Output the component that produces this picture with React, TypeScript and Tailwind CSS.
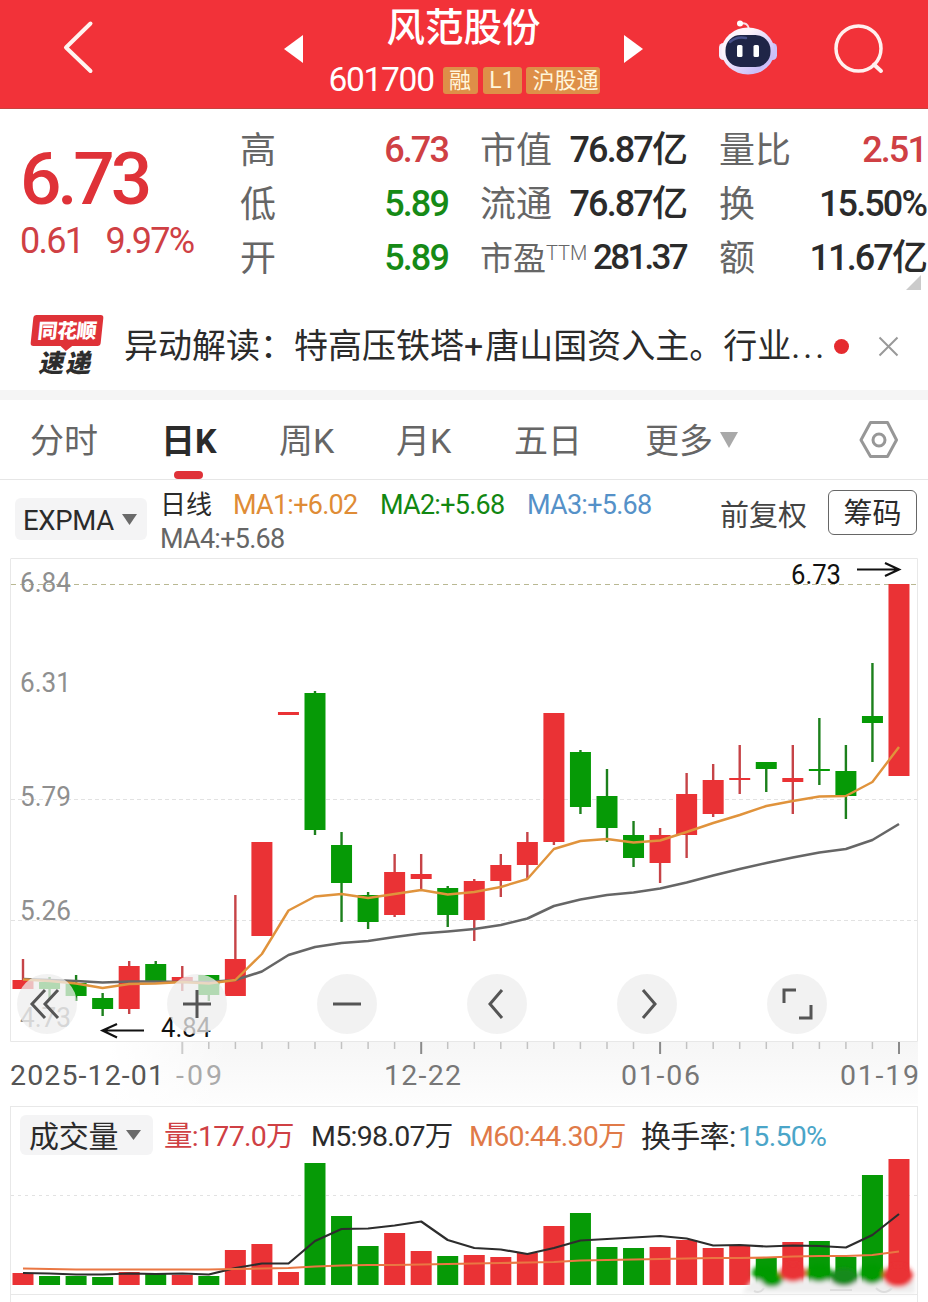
import React from 'react';

// Define the type for a trading day
interface Candle {
  up: boolean;
  top: number;
  bottom: number;
  high: number;
  low: number;
  volume: number;
}

interface StatProps {
  label: string;
  sup?: string;
  value: string;
  color: string;
}

const RED = '#ea3235';
const GREEN = '#069a06';
const STEP = 26.545;

const c = (up: boolean, top: number, bottom: number, high: number, low: number, volume: number): Candle => ({
  up,
  top,
  bottom,
  high,
  low,
  volume,
});

const candles: Candle[] = [
  c(true, 980, 989, 959, 989, 1273),
  c(false, 982, 989, 977, 1000, 1276),
  c(false, 983, 996, 975, 1001, 1276),
  c(false, 998, 1009, 993, 1016, 1277),
  c(true, 966, 1009, 961, 1014, 1272),
  c(false, 964, 981, 961, 981, 1274),
  c(true, 977, 982, 966, 991, 1275),
  c(false, 975, 995, 975, 1001, 1276),
  c(true, 959, 996, 895, 996, 1250),
  c(true, 842, 936, 842, 936, 1244),
  c(true, 712, 715, 712, 715, 1272),
  c(false, 693, 830, 691, 835, 1163),
  c(false, 845, 883, 832, 922, 1216),
  c(false, 895, 922, 892, 929, 1246),
  c(true, 872, 915, 854, 917, 1233),
  c(true, 874, 879, 854, 889, 1251),
  c(false, 888, 915, 886, 927, 1256),
  c(true, 881, 920, 879, 941, 1255),
  c(true, 865, 881, 854, 897, 1257),
  c(true, 842, 865, 832, 879, 1253),
  c(true, 713, 842, 713, 845, 1226),
  c(false, 752, 807, 750, 814, 1213),
  c(false, 796, 828, 769, 842, 1247),
  c(false, 835, 858, 821, 867, 1248),
  c(true, 835, 863, 828, 883, 1247),
  c(true, 794, 835, 773, 858, 1240),
  c(true, 780, 814, 764, 817, 1248),
  c(true, 778, 780, 745, 794, 1245),
  c(false, 762, 769, 762, 792, 1258),
  c(true, 778, 782, 745, 814, 1242),
  c(false, 769, 771, 718, 785, 1241),
  c(false, 771, 796, 745, 819, 1257),
  c(false, 716, 723, 663, 762, 1175),
  c(true, 584, 776, 584, 776, 1159),
];

const fastLine = [
  979.5, 981, 983.5, 988, 984, 983.5, 982, 983.5, 980, 954, 910.5, 896.5, 894, 898, 894, 890, 894.5, 892, 887, 879,
  849, 841, 839, 842.5, 840.5, 832, 823, 815, 806, 801, 796.5, 796, 782, 747,
];
const slowLine = [
  979, 980, 981, 982.5, 981.5, 981.5, 982, 982, 980, 971.5, 955, 947, 943, 941, 937, 933.5, 931.5, 929, 925, 918.5,
  906, 899.5, 895, 892.5, 888.5, 882.5, 875.5, 869, 863, 857.5, 852.5, 849, 840, 824,
];
const volumeM5 = [
  1273, 1273.5, 1274.5, 1274.5, 1273.5, 1274, 1273.5, 1274.5, 1268, 1263.5, 1263.5, 1241, 1229, 1228.5, 1225.5,
  1221.5, 1240, 1248, 1249.5, 1254, 1248, 1240.5, 1239, 1237.5, 1236, 1238.5, 1245.5, 1245, 1246.5, 1245.5, 1246,
  1247.5, 1235, 1214,
];
const volumeM60 = [
  1268.5, 1269, 1269.5, 1269.5, 1269.5, 1269.5, 1269.5, 1269.5, 1269, 1268.5, 1268, 1266.5, 1265.5, 1265, 1265,
  1264.5, 1264, 1263.5, 1263, 1262.5, 1262, 1260.5, 1260, 1259.5, 1259, 1258.5, 1258, 1258, 1257.5, 1256.5, 1256,
  1256, 1255, 1251.5,
];

const xAt = (i: number) => 23 + i * STEP;
const toPoints = (values: number[]) => values.map((y, i) => `${xAt(i).toFixed(1)},${y}`).join(' ');

const RobotIcon = () => (
  <svg className="w-[60px] h-[58px]" viewBox="0 0 60 58">
    <defs>
      <linearGradient id="shell" x1="0" y1="0" x2="1" y2="1">
        <stop offset="0.3" stopColor="#fdf4fb" />
        <stop offset="0.8" stopColor="#c9bdf8" />
        <stop offset="1" stopColor="#eee6ff" />
      </linearGradient>
    </defs>
    <path d="M22 5.500Q30 4 31 11" fill="none" stroke="#f8dfe6" strokeWidth="2" />
    <circle cx="22" cy="5.500" r="3" fill="#fff" />
    <rect x="1" y="25" width="9" height="17" rx="4.500" fill="#f6ecfa" />
    <rect x="50" y="25" width="9" height="17" rx="4.500" fill="#c9c3fb" />
    <ellipse cx="30" cy="33" rx="26.500" ry="23.500" fill="url(#shell)" />
    <rect x="7.500" y="17" width="45" height="32" rx="15" fill="#1f2547" />
    <path d="M12 24Q19 18 28 20" fill="none" stroke="#47508a" strokeWidth="2.500" strokeLinecap="round" />
    <rect x="19" y="27" width="5.500" height="12" rx="1.500" fill="#fff" />
    <rect x="35.500" y="27" width="5.500" height="12" rx="1.500" fill="#fff" />
  </svg>
);

const Header = () => (
  <header className="flex h-[109px] bg-[#f23239] border-b border-[#c9423f] text-white">
    <svg className="ml-[62px] mt-[20px] w-[32px] h-[54px] shrink-0" viewBox="0 0 32 54" fill="none">
      <path d="M28.500 3.500L4 27.500L28.500 51" stroke="#fff4f0" strokeWidth="4" strokeLinecap="round" strokeLinejoin="round" />
    </svg>
    <svg className="ml-[190px] mt-[35px] w-[19px] h-[28px] shrink-0" viewBox="0 0 19 28">
      <path d="M19 0V28L0 14Z" fill="#fff" />
    </svg>
    <div className="ml-[17px] w-[290px] shrink-0 flex flex-col items-center">
      <h1 className="-ml-[3px] mt-[5px] text-[38.500px] leading-[46px] font-medium">风范股份</h1>
      <div className="mt-[11px] -ml-[2px] flex items-center h-[36px]">
        <span className="w-[114px] text-[33.500px] leading-[36px] tracking-[-1.300px]">601700</span>
        <span className="w-[35px] h-[27px] rounded-[3px] bg-[#de8f48] text-[22px] leading-[28px] text-center text-[#fff6dc]">融</span>
        <span className="ml-[5px] w-[39px] h-[27px] rounded-[3px] bg-[#de8f48] text-[23px] leading-[28px] text-center text-[#fff6dc]">L1</span>
        <span className="ml-[4px] w-[74px] h-[27px] rounded-[3px] bg-[#de8f48] pl-[7px] text-[22px] leading-[28px] whitespace-nowrap text-[#fff6dc]">沪股通</span>
      </div>
    </div>
    <svg className="ml-[14px] mt-[35px] w-[19px] h-[28px] shrink-0" viewBox="0 0 19 28">
      <path d="M0 0V28L19 14Z" fill="#fff" />
    </svg>
    <div className="ml-[75px] mt-[18px] shrink-0">
      <RobotIcon />
    </div>
    <svg className="ml-[56px] mt-[23px] w-[52px] h-[52px] shrink-0" viewBox="0 0 52 52" fill="none" stroke="#fff0ee" strokeLinecap="round">
      <circle cx="24.500" cy="25.500" r="22.500" strokeWidth="3.500" />
      <path d="M40 41.500L47 48" strokeWidth="4" />
    </svg>
  </header>
);

const Stat: React.FC<StatProps> = ({ label, sup, value, color }) => (
  <div className="flex justify-between h-[54px] leading-[54px] whitespace-nowrap">
    <span className="text-[36px] text-[#666] flex">
      <span className={sup ? 'text-[33px]' : ''}>{label}</span>
      {sup && <span className="text-[20px] leading-[42px] font-light">{sup}</span>}
    </span>
    <span className={`-mt-px mr-[2px] font-medium ${sup ? 'text-[35px] tracking-[-2.700px]' : 'text-[36px] tracking-[-1.900px]'} ${color}`}>
      {value}
    </span>
  </div>
);

const Quote = () => (
  <section className="relative flex h-[183px] pt-[15px]">
    <div className="w-[240px] pl-[20px] shrink-0 text-[#df3238]">
      <div className="mt-[17px] h-[76px] text-[73px] leading-[76px] tracking-[-4.200px] font-medium">6.73</div>
      <div className="mt-[4px] flex gap-[22px] text-[36px] leading-[40px] tracking-[-1.700px] text-[#cf4044]">
        <span>0.61</span>
        <span>9.97%</span>
      </div>
    </div>
    <div className="w-[210px] shrink-0">
      <Stat label="高" value="6.73" color="text-[#cf4044]" />
      <Stat label="低" value="5.89" color="text-[#168a16]" />
      <Stat label="开" value="5.89" color="text-[#168a16]" />
    </div>
    <div className="ml-[30px] w-[208px] shrink-0">
      <Stat label="市值" value="76.87亿" color="text-[#2b2b2b]" />
      <Stat label="流通" value="76.87亿" color="text-[#2b2b2b]" />
      <Stat label="市盈" sup="TTM" value="281.37" color="text-[#2b2b2b]" />
    </div>
    <div className="ml-[31px] w-[209px] shrink-0">
      <Stat label="量比" value="2.51" color="text-[#cf4044]" />
      <Stat label="换" value="15.50%" color="text-[#2b2b2b]" />
      <Stat label="额" value="11.67亿" color="text-[#2b2b2b]" />
    </div>
    <svg className="absolute right-[7px] bottom-[2px] w-[15px] h-[15px]" viewBox="0 0 15 15">
      <path d="M15 0V15H0Z" fill="#cbcbcb" />
    </svg>
  </section>
);

const News = () => (
  <section className="flex items-center h-[108px] pt-[10px] border-b-[10px] border-[#f5f5f5]">
    <div className="ml-[30px] w-[74px] h-[62px] shrink-0 flex flex-col items-center">
      <div className="relative w-[70px] h-[31px] rounded-[3px] bg-[#df3238] -skew-x-6 text-center text-[20px] leading-[32px] tracking-[-0.500px] font-black text-white">
        同花顺
        <svg className="absolute left-[29px] top-[30px] w-[14px] h-[6px]" viewBox="0 0 14 6">
          <path d="M0 0H14L7 6Z" fill="#df3238" />
        </svg>
      </div>
      <div className="mt-[4px] text-[25px] leading-[28px] font-black -skew-x-12 text-[#2d2d2d] tracking-[2px]">速递</div>
    </div>
    <p className="ml-[20px] w-[704px] shrink-0 text-[34px] leading-[50px] whitespace-nowrap text-[#2b2b2b]">
      异动解读：特高压铁塔<span className="tracking-[2px]">+</span>唐山国资入主。行业<span className="tracking-[3px]">...</span>
    </p>
    <span className="ml-[6px] w-[15px] h-[15px] rounded-full bg-[#e52b2f] shrink-0" />
    <svg className="ml-[29px] w-[21px] h-[21px] shrink-0" viewBox="0 0 21 21">
      <path d="M1.500 1.500L19.500 19.500M19.500 1.500L1.500 19.500" stroke="#999" strokeWidth="2" />
    </svg>
  </section>
);

const Tabs = () => (
  <nav className="flex h-[80px] pl-[30px] border-b border-[#e6e6e6] text-[34px] leading-[83px] text-[#666] whitespace-nowrap">
    <span className="w-[131px]">分时</span>
    <span className="relative w-[118px] font-bold text-[#2b2b2b]">
      日K
      <i className="absolute left-[13px] bottom-0 w-[29px] h-[8px] rounded-full bg-[#df3238]" />
    </span>
    <span className="w-[117px]">周K</span>
    <span className="w-[118px]">月K</span>
    <span className="w-[131px]">五日</span>
    <span className="flex w-[214px]">
      更多
      <svg className="ml-[7px] mt-[32px] w-[18px] h-[16px]" viewBox="0 0 18 16">
        <path d="M0 0H18L9 16Z" fill="#a9a9a9" />
      </svg>
    </span>
    <svg className="mt-[20px] w-[40px] h-[40px]" viewBox="0 0 40 40" fill="none" stroke="#979797" strokeWidth="3">
      <path d="M11.500 2.500H28.500L37.500 20L28.500 36.500H11.500L2 20Z" strokeLinejoin="round" />
      <circle cx="20" cy="20" r="6" />
    </svg>
  </nav>
);

const Indicators = () => (
  <section className="flex h-[78px] text-[#2b2b2b] whitespace-nowrap">
    <div className="ml-[15px] mt-[18px] w-[132px] h-[42px] shrink-0 rounded-[6px] bg-[#f4f4f5] flex items-center pl-[8px]">
      <span className="mt-[3px] w-[99px] text-[27.500px] leading-[44px] tracking-[-0.300px]">EXPMA</span>
      <svg className="w-[15px] h-[11px]" viewBox="0 0 15 11">
        <path d="M0 0H15L7.500 11Z" fill="#6a6a6a" />
      </svg>
    </div>
    <div className="ml-[13px] mt-[8px] w-[560px] shrink-0 text-[27px] leading-[35px] tracking-[-0.750px]">
      <div className="flex h-[34px]">
        <span className="w-[73px] text-[26px] tracking-normal">日线</span>
        <span className="w-[147px] text-[#df8c36]">MA1:+6.02</span>
        <span className="w-[147px] text-[#128712]">MA2:+5.68</span>
        <span className="text-[#5591c8]">MA3:+5.68</span>
      </div>
      <div className="text-[#666]">MA4:+5.68</div>
    </div>
    <span className="mt-[15px] w-[108px] shrink-0 text-[29px] leading-[43px] text-[#444]">前复权</span>
    <button className="mt-[10px] w-[89px] h-[45px] shrink-0 rounded-[6px] border border-[#666] text-[29px] leading-[46px] text-center">
      筹码
    </button>
  </section>
);

const priceLabels = [
  { text: '6.84', y: 592 },
  { text: '6.31', y: 692 },
  { text: '5.79', y: 806 },
  { text: '5.26', y: 920 },
  { text: '4.73', y: 1027 },
];

const buttonIcons = [
  'M28 16L15 30L28 44M41 16L28 30L41 44',
  'M16 30H44M30 16V44',
  'M16 30H44',
  'M35 16L23 30L35 44',
  'M26 16L38 30L26 44',
  'M17 29V16H29M44 31V44H32',
];

const PriceChart = () => (
  <section className="relative h-[546px]">
    <svg className="block w-[928px] h-[546px]" viewBox="0 558 928 546">
      <defs>
        <linearGradient id="fade" x1="0" y1="0" x2="0" y2="1">
          <stop offset="0" stopColor="#f6f6f6" />
          <stop offset="1" stopColor="#fdfdfd" />
        </linearGradient>
        <linearGradient id="edge" x1="0" y1="0" x2="1" y2="0">
          <stop offset="0" stopColor="#fff" />
          <stop offset="1" stopColor="#fff" stopOpacity="0" />
        </linearGradient>
      </defs>
      <rect x="110" y="1042" width="808" height="62" fill="url(#fade)" />
      <rect x="109" y="1042" width="120" height="62" fill="url(#edge)" />
      <path d="M11 558.500H917.500V1041.500H10.500V558.500" fill="none" stroke="#e8e8e8" />

      {/* Grid */}
      <path d="M11 584.500H917" stroke="#b9b892" strokeDasharray="5 4" />
      <path d="M11 799.500H917M11 920.500H917" stroke="#e2e2e2" strokeDasharray="4 3" />

      {priceLabels.map((label) => (
        <text key={label.text} x="20" y={label.y} fontSize="28.500" fill="#8f8f8f" textLength="51" lengthAdjust="spacingAndGlyphs">
          {label.text}
        </text>
      ))}

      {/* Candles */}
      {candles.map((d, i) => (
        <g key={i} fill={d.up ? RED : GREEN}>
          <rect x={xAt(i) - 1.2} y={d.high} width="2.400" height={d.low - d.high} fill={d.up ? '#c64347' : '#1c801c'} />
          <rect x={xAt(i) - 10.5} y={d.top} width="21" height={d.bottom - d.top} />
        </g>
      ))}
      <polyline points={toPoints(slowLine)} fill="none" stroke="#666" strokeWidth="2.600" strokeLinejoin="round" />
      <polyline points={toPoints(fastLine)} fill="none" stroke="#e0933c" strokeWidth="2.400" strokeLinejoin="round" />

      {/* High and low markers */}
      <text x="791" y="584" fontSize="27" fill="#111" textLength="50" lengthAdjust="spacingAndGlyphs">6.73</text>
      <path d="M857 569.500H898M885 563L899 569.500L885 576" fill="none" stroke="#111" strokeWidth="2.200" />
      <text x="161" y="1037" fontSize="27" fill="#111" textLength="50" lengthAdjust="spacingAndGlyphs">4.84</text>
      <path d="M144 1030.500H103M117 1024L102.500 1030.500L117 1037.500" fill="none" stroke="#111" strokeWidth="2.200" />

      {/* Time axis */}
      {candles.map((_, i) =>
        i < 6 ? null : (
          <path
            key={i}
            d={`M${xAt(i).toFixed(1)} 1042V${i % 9 === 6 ? 1054 : 1049}`}
            stroke={i === 6 ? '#ccc' : i % 9 === 6 ? '#8a8a8a' : '#c2c2c2'}
            strokeWidth={i % 9 === 6 ? 2 : 1.5}
          />
        )
      )}
      <g fontSize="28.500" fill="#777">
        <text x="10" y="1085" textLength="154" fill="#555">2025-12-01</text>
        <text x="176" y="1085" textLength="46" fill="#aaa">-09</text>
        <text x="384" y="1085" textLength="77">12-22</text>
        <text x="621" y="1085" textLength="79">01-06</text>
        <text x="840" y="1085" textLength="79">01-19</text>
      </g>
    </svg>

    {/* Chart controls */}
    <div className="absolute left-[17px] top-[416px] flex gap-[90px]">
      {buttonIcons.map((d) => (
        <button key={d} className="w-[60px] h-[60px] rounded-full bg-[#eeeeee]/75">
          <svg className="w-[60px] h-[60px]" viewBox="0 0 60 60" fill="none" stroke="#555" strokeWidth="3">
            <path d={d} />
          </svg>
        </button>
      ))}
    </div>
  </section>
);

const VolumeChart = () => (
  <section className="mt-[2px] mx-[10px] border border-b-0 border-[#e8e8e8] h-[196px]">
    <div className="flex items-center h-[56px] text-[28.500px] leading-[45px] tracking-[-0.700px] whitespace-nowrap text-[#2b2b2b]">
      <div className="ml-[9px] w-[133px] h-[40px] shrink-0 rounded-[6px] bg-[#f4f4f5] flex items-center pl-[9px]">
        <span className="mt-[2px] w-[97px] text-[30px] tracking-[-0.300px]">成交量</span>
        <svg className="w-[15px] h-[10px]" viewBox="0 0 15 10">
          <path d="M0 0H15L7.500 10Z" fill="#6a6a6a" />
        </svg>
      </div>
      <span className="mt-[2px] ml-[11px] w-[147px] text-[#cf4044]">量:177.0万</span>
      <span className="mt-[2px] w-[158px]">M5:98.07万</span>
      <span className="mt-[2px] w-[172px] text-[#e07a48]">M60:44.30万</span>
      <span className="mt-[2px] w-[97px] text-[30px]">换手率:</span>
      <span className="mt-[2px] text-[#4ba5c8]">15.50%</span>
    </div>
    <svg className="block w-[906px] h-[139px]" viewBox="11 1163 906 139" overflow="visible">
      <defs>
        <filter id="soft" x="-20%" y="-50%" width="140%" height="200%">
          <feGaussianBlur stdDeviation="2" />
        </filter>
      </defs>
      <path d="M11 1195.500H917" stroke="#e2e2e2" strokeDasharray="3 4" />
      {candles.map((d, i) => (
        <rect key={i} x={xAt(i) - 10.5} y={d.volume} width="21" height={1285 - d.volume} fill={d.up ? RED : GREEN} />
      ))}
      <polyline points={toPoints(volumeM5)} fill="none" stroke="#2d2d2d" strokeWidth="2.200" strokeLinejoin="round" />
      <polyline points={toPoints(volumeM60)} fill="none" stroke="#ea7743" strokeWidth="2.200" strokeLinejoin="round" />
      <path d="M11 1294.500H917" stroke="#e8e8e8" />

      {/* Smudged strip in the corner */}
      <g filter="url(#soft)">
        <path d="M742 1293L752 1280H915V1293Z" fill="#eeeeee" />
        <ellipse cx="764" cy="1273" rx="12" ry="8" fill={GREEN} />
        <ellipse cx="772" cy="1279" rx="11" ry="8" fill={GREEN} />
        <ellipse cx="793" cy="1273" rx="13" ry="9" fill={RED} />
        <ellipse cx="819" cy="1273" rx="13" ry="9" fill={GREEN} />
        <ellipse cx="844" cy="1277" rx="14" ry="9" fill="#158a1a" />
        <ellipse cx="872" cy="1274" rx="12" ry="10" fill={GREEN} />
        <ellipse cx="898" cy="1276" rx="15" ry="11" fill={RED} />
      </g>
      <path d="M754 1291Q760 1294 764 1288M830 1290H852M876 1288Q884 1296 892 1288" fill="none" stroke="#dddddd" strokeWidth="2" />
    </svg>
  </section>
);

const App: React.FC = () => {
  return (
    <div className="w-[928px] h-[1302px] overflow-hidden bg-white font-['Roboto','Noto_Sans_CJK_SC',sans-serif]">
      <Header />
      <Quote />
      <News />
      <Tabs />
      <Indicators />
      <PriceChart />
      <VolumeChart />
    </div>
  );
};

export default App;
